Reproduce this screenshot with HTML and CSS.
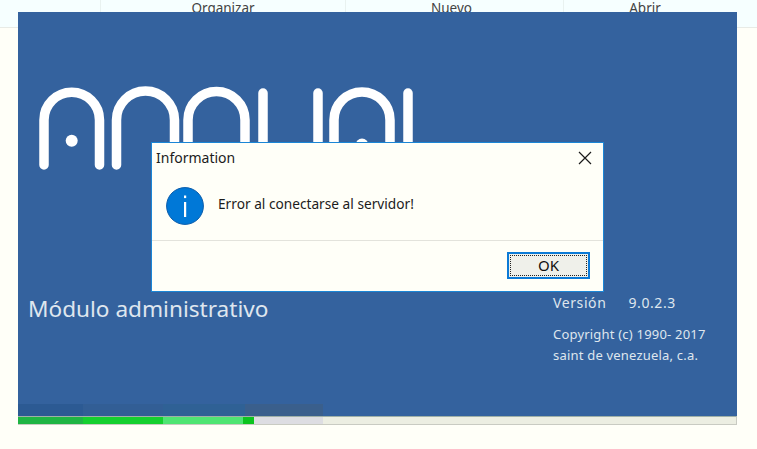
FILE: index.html
```html
<!DOCTYPE html>
<html lang="es">
<head>
<meta charset="utf-8">
<title>Información</title>
<link rel="stylesheet" href="styles.css">
</head>
<body>
<div class="desktop">
  <div class="ribbon">
    <div class="rib rib-a"></div>
    <div class="rib rib-b">Organizar</div>
    <div class="rib rib-c">Nuevo</div>
    <div class="rib rib-d">Abrir</div>
  </div>

  <div class="splash">
    <div class="splash-main">
      <svg class="logo" width="400" height="90" viewBox="0 0 400 90" fill="none">
        <g stroke="#fff" stroke-width="9.5" stroke-linecap="round" transform="translate(-18 -84)">
          <path d="M44 165V120A27.75 27.75 0 0 1 99.5 120V165"/>
          <path d="M116.5 165V120A29 29 0 0 1 174.5 120V165"/>
          <path d="M188 165V120A28.5 28.5 0 0 1 245 120V165"/>
          <path d="M263 93V165"/>
          <path d="M318 93V165"/>
          <path d="M334 165V120A28 28 0 0 1 390 120V165"/>
          <path d="M408 93V165"/>
        </g>
        <circle cx="53.7" cy="56.7" r="6" fill="#fff"/>
        <circle cx="344" cy="61" r="6.5" fill="#fff"/>
      </svg>
      <div class="splash-info">
        <div class="module">Módulo administrativo</div>
        <div class="about">
          <div class="version"><span>Versión</span><span>9.0.2.3</span></div>
          <div class="copy">Copyright (c) 1990- 2017</div>
          <div class="copy">saint de venezuela, c.a.</div>
        </div>
      </div>
    </div>
    <div class="ghost">
      <div class="ghost-a"></div><div class="ghost-b"></div><div class="ghost-c"></div><div class="ghost-d"></div>
    </div>
    <div class="progress">
      <div class="bar"></div>
      <div class="bar-rest"></div>
    </div>
  </div>

  <div class="dialog">
    <div class="dialog-title">
      <span>Information</span>
      <svg class="close" width="14" height="14" viewBox="0 0 14 14"><path d="M1 1L13 13M13 1L1 13" stroke="#1a1a1a" stroke-width="1.2" fill="none"/></svg>
    </div>
    <div class="dialog-body">
      <svg class="info" width="38" height="38" viewBox="0 0 38 38">
        <circle cx="19" cy="19" r="18.4" fill="#0078d7" stroke="#0a5cab" stroke-width="1"/>
        <rect x="18" y="15" width="2.2" height="15" fill="#fff"/>
        <rect x="18" y="8.5" width="2.2" height="2.6" fill="#fff"/>
      </svg>
      <span class="message">Error al conectarse al servidor!</span>
    </div>
    <div class="dialog-foot">
      <button class="ok"><span>OK</span></button>
    </div>
  </div>
</div>
</body>
</html>
```
FILE: styles.css
```css
* { box-sizing: border-box; }
html, body { margin: 0; padding: 0; }
body {
  width: 757px;
  height: 449px;
  overflow: hidden;
  background: #fffff8;
  font-family: "Noto Sans", "Open Sans", sans-serif;
}
.desktop { position: relative; width: 757px; height: 449px; }

.ribbon {
  display: flex;
  height: 28px;
  background: #f6ffff;
  border-bottom: 1px solid #e8ebe6;
  font-size: 13.5px;
  color: #444;
  text-align: center;
  line-height: 16px;
}
.rib { border-right: 1px solid #e9f2f0; }
.rib-a { width: 101px; }
.rib-b { width: 245px; }
.rib-c { width: 218px; padding-right: 6px; }
.rib-d { flex: 1; border-right: 0; padding-right: 31px; }

.splash {
  position: absolute;
  left: 18px;
  top: 12px;
  width: 719px;
  height: 413px;
  display: flex;
  flex-direction: column;
  background: #34629e;
}
.splash-main {
  flex: 1;
  display: flex;
  flex-direction: column;
  padding: 72px 0 0 0;
}
.logo { display: block; }
.splash-info {
  display: flex;
  justify-content: space-between;
  align-items: flex-start;
  margin-top: 120px;
  color: #dfe6ee;
}
.module {
  font-size: 22.6px;
  line-height: 30px;
  margin: 0 0 0 10px;
}
.about { width: 184px; }
.version {
  display: flex;
  gap: 22px;
  font-size: 14px;
  line-height: 18px;
  letter-spacing: 0.6px;
  margin-bottom: 12px;
}
.copy { font-size: 13px; line-height: 21px; letter-spacing: 0.2px; }

.ghost { display: flex; height: 12px; margin-top: -12px; position: relative; }
.ghost div { height: 12px; }
.ghost-a { width: 65px; background: #2c5a93; }
.ghost-b { width: 80px; background: #325e95; }
.ghost-c { width: 82px; background: #2f6195; }
.ghost-d { width: 78px; background: #3a5f8c; }

.progress {
  flex: none;
  display: flex;
  height: 9px;
  background: #eceee2;
  border-top: 1px solid #9fb0a8;
  border-bottom: 1px solid #c9cbc2;
  border-right: 1px solid #c9cbc2;
}
.bar {
  width: 236px;
  background: linear-gradient(90deg, #1fb544 0 65px, #15d02f 65px 145px, #4fe573 145px 225px, #0cc41f 225px);
}
.bar-rest { width: 69px; background: #dddde2; }

.dialog {
  position: absolute;
  left: 151px;
  top: 142px;
  width: 453px;
  height: 150px;
  display: flex;
  flex-direction: column;
  background: #fffff8;
  border: 1px solid #1b86d6;
  color: #1c1c1c;
}
.dialog-title {
  display: flex;
  justify-content: space-between;
  align-items: center;
  height: 29px;
  padding: 0 11px 0 4px;
  font-size: 14px;
}
.dialog-body {
  flex: 1;
  display: flex;
  align-items: center;
  gap: 14px;
  padding: 0 0 0 14px;
  font-size: 13.7px;
}
.message { margin-top: -5px; }
.dialog-foot {
  flex: none;
  display: flex;
  justify-content: flex-end;
  align-items: center;
  height: 51px;
  padding: 0 13px 2px 0;
  border-top: 1px solid #e3e3dc;
}
.ok {
  display: flex;
  width: 83px;
  height: 27px;
  padding: 1px;
  border: 2px solid #0c7ad6;
  background: #eff0ea;
  font: 15px "Noto Sans", "Open Sans", sans-serif;
  color: #111;
}
.ok span {
  flex: 1;
  line-height: 19px;
  border: 1px dotted #222;
  text-align: center;
}
```
